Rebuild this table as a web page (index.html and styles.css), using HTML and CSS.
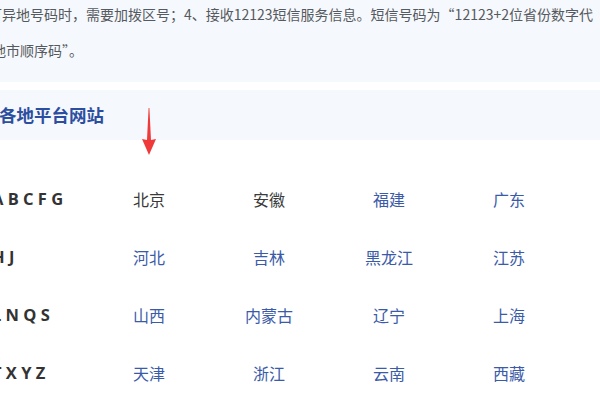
FILE: index.html
```html
<!DOCTYPE html>
<html lang="zh-CN">
<head>
<meta charset="utf-8">
<link rel="stylesheet" href="styles.css">
</head>
<body>
<div class="page">
  <section class="intro">
    <div class="line line-1">可异地号码时，需要加拨区号；4、接收12123短信服务信息。短信号码为“12123+2位省份数字代</div>
    <div class="line line-2">地市顺序码”。</div>
  </section>
  <section class="heading">
    <h2>各地平台网站</h2>
    <svg class="arrow" width="18" height="50" viewBox="0 0 18 50" aria-hidden="true">
      <path d="M8.6 1 L9.4 1 L11 33 L16 32 L9 48 L2 32 L7 33 Z" fill="#f03a3a"/>
    </svg>
  </section>
  <div class="grid">
    <div class="letters">A B C F G</div>
    <a class="prov plain">北京</a>
    <a class="prov plain">安徽</a>
    <a class="prov">福建</a>
    <a class="prov">广东</a>

    <div class="letters">H J</div>
    <a class="prov">河北</a>
    <a class="prov">吉林</a>
    <a class="prov">黑龙江</a>
    <a class="prov">江苏</a>

    <div class="letters">L N Q S</div>
    <a class="prov">山西</a>
    <a class="prov">内蒙古</a>
    <a class="prov">辽宁</a>
    <a class="prov">上海</a>

    <div class="letters">T X Y Z</div>
    <a class="prov">天津</a>
    <a class="prov">浙江</a>
    <a class="prov">云南</a>
    <a class="prov">西藏</a>
  </div>
</div>
</body>
</html>
```

FILE: styles.css
```css
html, body {
  margin: 0;
  padding: 0;
  background: #ffffff;
  overflow: hidden;
}
body {
  font-family: "Noto Sans CJK SC", "Noto Sans", sans-serif;
}
.page {
  width: 600px;
  height: 402px;
  overflow: hidden;
  position: relative;
}
.intro {
  background: #f5f8fc;
  height: 82px;
  overflow: hidden;
}
.line {
  white-space: nowrap;
  font-size: 14px;
  line-height: 36px;
  color: #555a60;
}
.line-1 {
  margin-top: -4px;
  margin-left: -12px;
}
.line-2 {
  margin-left: -8px;
}
.heading {
  margin-top: 8px;
  height: 50px;
  background: #f5f8fc;
  position: relative;
  display: flex;
  align-items: center;
}
.heading h2 {
  margin: -2px 0 0 -1px;
  font-size: 17.5px;
  font-weight: 700;
  color: #2c4ea0;
}
.arrow {
  position: absolute;
  left: 140px;
  top: 17px;
}
.grid {
  margin-top: 30px;
  margin-left: -8px;
  display: grid;
  grid-template-columns: 97px repeat(4, 120px);
  grid-auto-rows: 58px;
  align-items: center;
}
.letters {
  font-family: "Open Sans", "Noto Sans", sans-serif;
  font-weight: 700;
  font-size: 16.5px;
  color: #333333;
  white-space: nowrap;
  margin-top: -2px;
}
.prov {
  text-align: center;
  font-size: 16px;
  color: #3b5ba8;
  text-decoration: none;
}
.prov.plain {
  color: #3a3a3a;
}
```
